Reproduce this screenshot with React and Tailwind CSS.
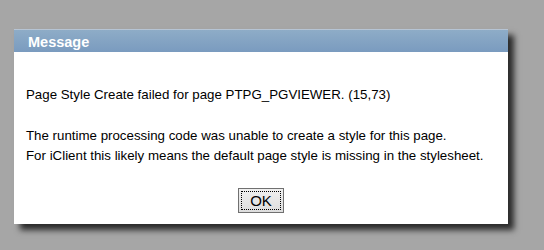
export default function App() {
  return (
    <div className="w-[544px] h-[250px] bg-[#a6a6a6] pt-[29px] pl-[14px] font-['Liberation_Sans',Arial,sans-serif]">
      <div className="w-[494px] h-[195px] bg-white shadow-[6px_6px_6px_rgba(0,0,0,0.75)] flex flex-col">
        <div className="h-[23px] border-t border-[#b6c4d4] bg-gradient-to-b from-[#8eacc7] to-[#7a9bbf] pl-[14px]">
          <span className="text-white font-bold text-[14.5px] leading-[20px]">Message</span>
        </div>
        <div className="pl-[12px] pt-[33px] text-[13.3px] leading-[20px] text-black">
          <p>Page Style Create failed for page PTPG_PGVIEWER. (15,73)</p>
          <p className="mt-[21px]">
            The runtime processing code was unable to create a style for this page.
            <br />
            For iClient this likely means the default page style is missing in the stylesheet.
          </p>
        </div>
        <div className="flex justify-center mt-[22px]">
          <button className="w-[46px] h-[25px] border border-[#707070] bg-gradient-to-b from-[#f0f0f0] to-[#dddddd] p-[2px]">
            <div className="w-full h-full border border-dotted border-black flex items-center justify-center text-[15px] leading-none">
              OK
            </div>
          </button>
        </div>
      </div>
    </div>
  );
}
